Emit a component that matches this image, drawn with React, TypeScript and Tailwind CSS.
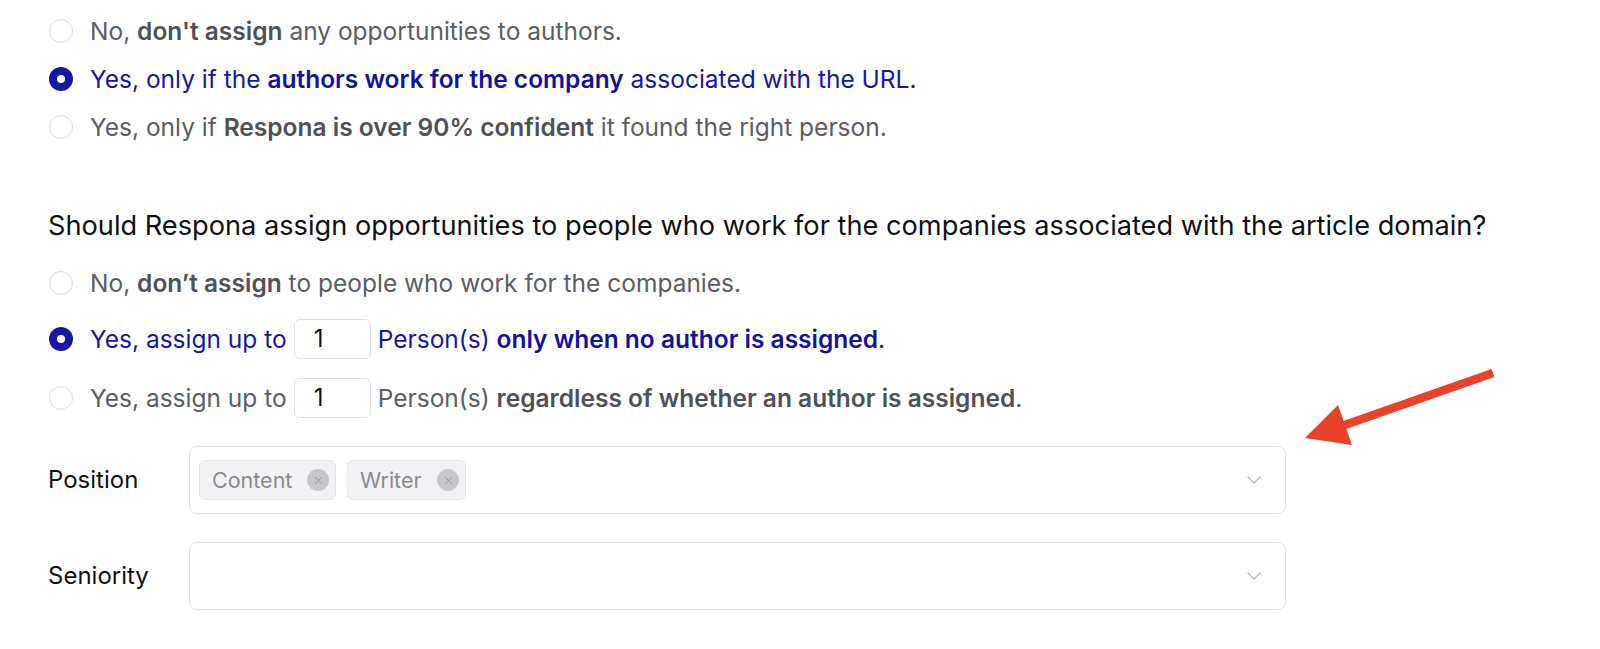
import { ChevronDown, X } from "lucide-react";
import type { ReactNode } from "react";

const font = { fontFamily: "Inter, 'Noto Sans', sans-serif" };

function Radio({ checked }: { checked?: boolean }) {
  return checked ? (
    <span className="flex h-6 w-6 shrink-0 items-center justify-center rounded-full bg-[#1717a6]">
      <span className="h-2 w-2 rounded-full bg-white" />
    </span>
  ) : (
    <span className="h-6 w-6 shrink-0 rounded-full border-[1.5px] border-[#dcdce3] bg-white" />
  );
}

function Option({
  checked,
  className,
  children,
}: {
  checked?: boolean;
  className?: string;
  children: ReactNode;
}) {
  return (
    <div className={`flex items-center gap-[17px] ${className ?? "h-12"}`}>
      <Radio checked={checked} />
      <div
        className={`flex items-center whitespace-pre text-[24.5px] ${
          checked ? "text-[#1717a6]" : "text-[#5c5d63]"
        }`}
      >
        {children}
      </div>
    </div>
  );
}

function B({ children, checked }: { children: ReactNode; checked?: boolean }) {
  return (
    <span className={checked ? "font-semibold text-[#12129c]" : "font-semibold text-[#505156]"}>
      {children}
    </span>
  );
}

function NumberBox() {
  return (
    <span className="mx-[7px] flex h-10 w-[77px] items-center rounded-md border-[1.5px] border-[#e0e1e6] bg-white pl-[19px] text-[24px] text-[#111]">
      1
    </span>
  );
}

function Chip({ label, width }: { label: string; width: string }) {
  return (
    <div
      className={`flex h-10 items-center justify-between rounded-md border border-[#e4e4e9] bg-[#f2f2f4] pl-[12px] pr-[6px] ${width}`}
    >
      <span className="text-[21.5px] text-[#8a8b91]">{label}</span>
      <span className="flex h-[22px] w-[22px] items-center justify-center rounded-full bg-[#c6c7cd]">
        <X size={13} strokeWidth={1.6} className="text-[#8e8f96]" />
      </span>
    </div>
  );
}

function Field({ label, children }: { label: string; children?: ReactNode }) {
  return (
    <div className="flex items-center">
      <div className="w-[141px] text-[24px] text-[#111]">{label}</div>
      <div className="flex h-[68px] w-[1097px] items-center justify-between rounded-lg border-[1.5px] border-[#e0e1e6] bg-white pl-[9px] pr-[19px]">
        <div className="flex items-center gap-[11px]">{children}</div>
        <ChevronDown size={24} strokeWidth={1.2} className="text-[#b4b5bc]" />
      </div>
    </div>
  );
}

export default function App() {
  return (
    <div className="relative h-[649px] w-full bg-white pl-[49px] pt-[7px]" style={font}>
      <div className="flex flex-col">
        <Option>
          No, <B>don't assign</B> any opportunities to authors.
        </Option>
        <Option checked>
          Yes, only if the <B checked>authors work for the company</B> associated with the URL.
        </Option>
        <Option>
          Yes, only if <B>Respona is over 90% confident</B> it found the right person.
        </Option>
      </div>

      <h2 className="mt-[57px] h-9 -ml-[1px] flex items-center text-[27.2px] font-normal text-[#111]">
        Should Respona assign opportunities to people who work for the companies associated with the article domain?
      </h2>

      <div className="mt-[15px] flex flex-col">
        <Option>
          No, <B>don’t assign</B> to people who work for the companies.
        </Option>
        <Option checked className="mt-[3px] h-[58px]">
          Yes, assign up to
          <NumberBox />
          Person(s) <B checked>only when no author is assigned</B>.
        </Option>
        <Option className="h-[60px]">
          Yes, assign up to
          <NumberBox />
          Person(s) <B>regardless of whether an author is assigned</B>.
        </Option>
      </div>

      <div className="mt-[18px] -ml-[1px] flex flex-col gap-[28px]">
        <Field label="Position">
          <Chip label="Content" width="w-[137px]" />
          <Chip label="Writer" width="w-[119px]" />
        </Field>
        <Field label="Seniority" />
      </div>

      <svg
        className="absolute left-[1290px] top-[360px]"
        width="220"
        height="95"
        viewBox="0 0 220 95"
      >
        <line x1="203" y1="13" x2="52" y2="66" stroke="#e8432a" strokeWidth="8.5" />
        <polygon points="15,78 48,45 62,85" fill="#e8432a" />
      </svg>
    </div>
  );
}
